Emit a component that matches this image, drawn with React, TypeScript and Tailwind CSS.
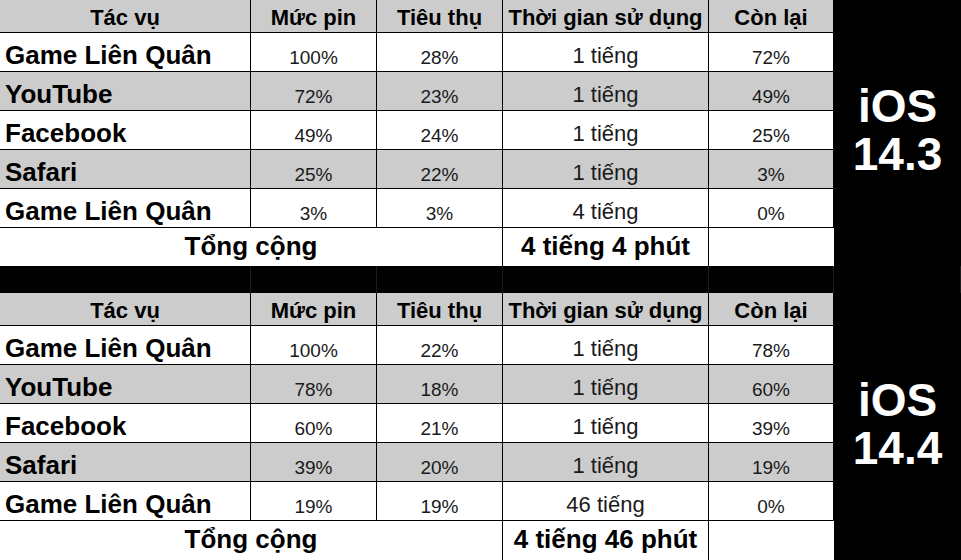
const rows1 = [
  ['Game Liên Quân', '100%', '28%', '1 tiếng', '72%'],
  ['YouTube', '72%', '23%', '1 tiếng', '49%'],
  ['Facebook', '49%', '24%', '1 tiếng', '25%'],
  ['Safari', '25%', '22%', '1 tiếng', '3%'],
  ['Game Liên Quân', '3%', '3%', '4 tiếng', '0%'],
];

const rows2 = [
  ['Game Liên Quân', '100%', '22%', '1 tiếng', '78%'],
  ['YouTube', '78%', '18%', '1 tiếng', '60%'],
  ['Facebook', '60%', '21%', '1 tiếng', '39%'],
  ['Safari', '39%', '20%', '1 tiếng', '19%'],
  ['Game Liên Quân', '19%', '19%', '46 tiếng', '0%'],
];

const headers = ['Tác vụ', 'Mức pin', 'Tiêu thụ', 'Thời gian sử dụng', 'Còn lại'];

function Section({ rows, total, version, totalHeight }: { rows: string[][]; total: string; version: string; totalHeight: string }) {
  return (
    <div className="flex">
      <div className="grid w-[834px] grid-cols-[251px_126px_126px_206px_125px]">
        {headers.map((h) => (
          <div
            key={h}
            className="flex h-[33px] items-end justify-center border-b border-r border-black bg-[#cccccc] pb-[3px] text-[22px] font-bold leading-[22px] text-black"
          >
            {h}
          </div>
        ))}
        {rows.map((r, i) => {
          const bg = i % 2 === 1 ? 'bg-[#cccccc]' : 'bg-white';
          return [
            <div key={i + 'a'} className={`flex h-[39px] items-end border-b border-r border-black pb-[3px] pl-[5px] text-[26px] font-bold leading-[26px] text-black ${bg}`}>
              {r[0]}
            </div>,
            <div key={i + 'b'} className={`flex h-[39px] items-end justify-center border-b border-r border-black pb-[4px] text-[19px] leading-[19px] text-[#1a1a1a] ${bg}`}>
              {r[1]}
            </div>,
            <div key={i + 'c'} className={`flex h-[39px] items-end justify-center border-b border-r border-black pb-[4px] text-[19px] leading-[19px] text-[#1a1a1a] ${bg}`}>
              {r[2]}
            </div>,
            <div key={i + 'd'} className={`flex h-[39px] items-end justify-center border-b border-r border-black pb-[4px] text-[22px] leading-[22px] text-[#1a1a1a] ${bg}`}>
              {r[3]}
            </div>,
            <div key={i + 'e'} className={`flex h-[39px] items-end justify-center border-b border-r border-black pb-[4px] text-[19px] leading-[19px] text-[#1a1a1a] ${bg}`}>
              {r[4]}
            </div>,
          ];
        })}
        <div className={`col-span-3 flex ${totalHeight} items-center justify-center border-r border-black bg-white pb-[3px] text-[26px] font-bold leading-[26px] text-black`}>
          Tổng cộng
        </div>
        <div className={`flex ${totalHeight} items-center justify-center border-r border-black bg-white pb-[3px] text-[26px] font-bold leading-[26px] text-black`}>
          {total}
        </div>
        <div className={`${totalHeight} bg-white`} />
      </div>
      <div className="flex w-[127px] flex-col items-center justify-center bg-black pb-[6px] text-center text-[46px] font-bold leading-[48px] text-white">
        <span>iOS</span>
        <span>{version}</span>
      </div>
    </div>
  );
}

export default function App() {
  return (
    <div className="h-[560px] w-[961px] overflow-hidden bg-black font-['Liberation_Sans',Arial,sans-serif]">
      <Section rows={rows1} total="4 tiếng 4 phút" version="14.3" totalHeight="h-[38px]" />
      <div className="grid h-[27px] grid-cols-[251px_126px_126px_206px_125px_127px] bg-black">
        <div className="border-r border-[#1c1c1c]" />
        <div className="border-r border-[#1c1c1c]" />
        <div className="border-r border-[#1c1c1c]" />
        <div className="border-r border-[#1c1c1c]" />
        <div className="border-r border-[#1c1c1c]" />
        <div className="border-r border-[#1c1c1c]" />
      </div>
      <Section rows={rows2} total="4 tiếng 46 phút" version="14.4" totalHeight="h-[39px]" />
    </div>
  );
}
